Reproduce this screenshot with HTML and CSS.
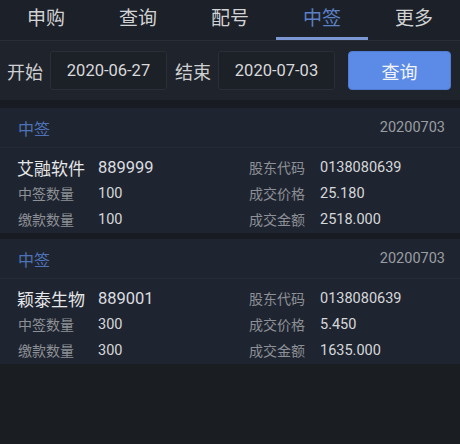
FILE: index.html
```html
<!DOCTYPE html>
<html lang="zh">
<head>
<meta charset="utf-8">
<title>中签</title>
<link rel="stylesheet" href="styles.css">
</head>
<body>
<div class="app">
  <nav class="tabs">
    <div class="tab">申购</div>
    <div class="tab">查询</div>
    <div class="tab">配号</div>
    <div class="tab active">中签</div>
    <div class="tab">更多</div>
  </nav>
  <div class="filter">
    <span class="flabel">开始</span>
    <div class="date">2020-06-27</div>
    <span class="flabel">结束</span>
    <div class="date">2020-07-03</div>
    <button class="btn">查询</button>
  </div>
  <div class="list">
    <section class="card">
      <header class="card-head">
        <span class="tag">中签</span>
        <span class="cdate">20200703</span>
      </header>
      <div class="card-body">
        <span class="name">艾融软件</span><span class="code">889999</span>
        <span class="lbl">股东代码</span><span class="val">0138080639</span>
        <span class="lbl">中签数量</span><span class="val">100</span>
        <span class="lbl">成交价格</span><span class="val">25.180</span>
        <span class="lbl">缴款数量</span><span class="val">100</span>
        <span class="lbl">成交金额</span><span class="val">2518.000</span>
      </div>
    </section>
    <section class="card">
      <header class="card-head">
        <span class="tag">中签</span>
        <span class="cdate">20200703</span>
      </header>
      <div class="card-body">
        <span class="name">颖泰生物</span><span class="code">889001</span>
        <span class="lbl">股东代码</span><span class="val">0138080639</span>
        <span class="lbl">中签数量</span><span class="val">300</span>
        <span class="lbl">成交价格</span><span class="val">5.450</span>
        <span class="lbl">缴款数量</span><span class="val">300</span>
        <span class="lbl">成交金额</span><span class="val">1635.000</span>
      </div>
    </section>
  </div>
</div>
</body>
</html>
```
FILE: styles.css
```css
* { box-sizing: border-box; }
html, body {
  margin: 0;
  padding: 0;
  background: #1a1d22;
}
body {
  font-family: Roboto, "Noto Sans CJK SC", sans-serif;
  width: 460px;
  height: 444px;
  overflow: hidden;
}
.tabs {
  display: flex;
  height: 41px;
  background: #1c2028;
  border-bottom: 1px solid #2a2e37;
}
.tab {
  flex: 1;
  text-align: center;
  font-size: 19px;
  line-height: 38px;
  color: #d2d3d5;
  border-bottom: 3px solid transparent;
}
.tab.active {
  color: #5b80c6;
  border-bottom-color: #7b97d4;
}
.filter {
  display: flex;
  align-items: center;
  height: 59px;
  padding: 0 9px 0 7px;
  background: #1f232b;
}
.flabel {
  font-size: 18px;
  color: #cfd0d2;
  margin-right: 7px;
}
.date {
  width: 117px;
  height: 39px;
  border: 1px solid #2a2e37;
  border-radius: 3px;
  background: #1c2027;
  color: #d8d9db;
  font-size: 16.5px;
  line-height: 37px;
  text-align: center;
  margin-right: 8px;
}
.date + .flabel + .date { margin-right: 0; }
.btn {
  margin-left: auto;
  width: 103px;
  height: 39px;
  border: 1px solid #4f7bd2;
  border-radius: 4px;
  background: #5b8be6;
  color: #f2f4f8;
  font-family: Roboto, "Noto Sans CJK SC", sans-serif;
  font-size: 18px;
  padding: 0;
}
.list {
  display: flex;
  flex-direction: column;
  gap: 6px;
  padding-top: 8px;
  background: #181b21;
  padding-bottom: 0;
}
.card {
  background: #1f2530;
}
.card-head {
  display: flex;
  justify-content: space-between;
  align-items: center;
  height: 40px;
  padding: 0 15px 0 18px;
  border-bottom: 1px solid #262c37;
}
.tag {
  font-size: 16px;
  color: #4d72b8;
}
.cdate {
  font-size: 14.5px;
  color: #9a9da2;
}
.card-body {
  display: grid;
  grid-template-columns: 80px 151px 71px 1fr;
  grid-auto-rows: 26px;
  align-items: center;
  padding: 6px 0 1px 18px;
}
.name {
  font-size: 17px;
  color: #e6e7e9;
  margin-left: -1px;
}
.code {
  font-size: 16.5px;
  color: #dcdde0;
}
.lbl {
  font-size: 14px;
  color: #8d9096;
}
.val {
  font-size: 14.5px;
  color: #d6d7da;
}
```
